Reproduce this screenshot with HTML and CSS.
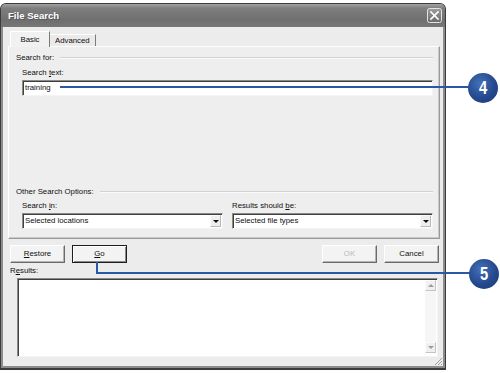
FILE: index.html
```html
<!DOCTYPE html>
<html>
<head>
<meta charset="utf-8">
<title>File Search</title>
<link rel="stylesheet" href="styles.css">
</head>
<body>
<div class="stage">
  <div class="window">
    <div class="titlebar">
      <span class="title">File Search</span>
      <span class="close">
        <svg width="15" height="15" viewBox="0 0 15 15">
          <defs>
            <linearGradient id="cg" x1="0" y1="0" x2="0" y2="1">
              <stop offset="0" stop-color="#9c9c9c"/>
              <stop offset="1" stop-color="#6a6a6a"/>
            </linearGradient>
          </defs>
          <rect x="0.5" y="0.5" width="14" height="14" rx="2" fill="url(#cg)" stroke="#e4e4e4"/>
          <path d="M4 4 L11 11 M11 4 L4 11" stroke="#fff" stroke-width="1.7" stroke-linecap="square"/>
        </svg>
      </span>
    </div>
    <div class="client">
      <div class="tabs">
        <div class="tab active">Basic</div>
        <div class="tab">Advanced</div>
      </div>
      <div class="panel">
        <div class="group"><span>Search for:</span><i class="rule"></i></div>
        <div class="label indent">Search <u>t</u>ext:</div>
        <div class="field indent">training</div>
        <div class="lower">
          <div class="group"><span>Other Search Options:</span><i class="rule"></i></div>
          <div class="cols indent">
            <div class="col">
              <div class="label">Search <u>i</u>n:</div>
              <div class="field select"><span>Selected locations</span><span class="drop"></span></div>
            </div>
            <div class="col">
              <div class="label">Results should <u>b</u>e:</div>
              <div class="field select"><span>Selected file types</span><span class="drop"></span></div>
            </div>
          </div>
        </div>
      </div>
      <div class="buttons">
        <button class="btn"><u>R</u>estore</button>
        <button class="btn default"><u>G</u>o</button>
        <span class="spacer"></span>
        <button class="btn disabled">OK</button>
        <button class="btn">Cancel</button>
      </div>
      <div class="label results-label">R<u>e</u>sults:</div>
      <div class="results">
        <div class="scroll">
          <span class="sbtn up"></span>
          <span class="sbtn down"></span>
        </div>
      </div>
      <svg class="grip" width="10" height="10" viewBox="0 0 10 10">
        <path d="M9 2 L2 9 M9 5 L5 9 M9 8 L8 9" stroke="#a0a0a0" stroke-width="1"/>
      </svg>
    </div>
  </div>

  <div class="line line4"></div>
  <div class="badge badge4"><span>4</span></div>
  <div class="line line5v"></div>
  <div class="line line5h"></div>
  <div class="badge badge5"><span>5</span></div>
</div>
</body>
</html>
```

FILE: styles.css
```css
html, body {
  margin: 0;
  background: #ffffff;
}
body {
  font-family: "Liberation Sans", Arial, sans-serif;
  font-size: 7.8px;
  color: #0e0e0e;
}
.stage {
  position: relative;
  width: 500px;
  height: 373px;
  padding-top: 3px;
  box-sizing: border-box;
  overflow: hidden;
}
.window {
  width: 446px;
  height: 367px;
  box-sizing: border-box;
  border: 1px solid #3c3c3c;
  border-bottom-width: 2px;
  border-radius: 6px 6px 0 0;
  background: #8c8c8c;
  padding: 0 2px 2px;
  display: flex;
  flex-direction: column;
}
.titlebar {
  height: 23px;
  flex: none;
  margin: 0 -2px;
  padding: 0 3px 0 7px;
  display: flex;
  align-items: center;
  justify-content: space-between;
  border-radius: 5px 5px 0 0;
  background: linear-gradient(#a2a2a2 0%, #7e7e7e 18%, #6f6f6f 70%, #777777 100%);
}
.title {
  color: #ffffff;
  font-weight: bold;
  font-size: 9.6px;
  text-shadow: 1px 1px 0 #555;
}
.close {
  display: flex;
  width: 15px;
  height: 15px;
}
.client {
  flex: 1;
  position: relative;
  background: #ececec;
  padding: 4px 3px 0 5px;
  display: flex;
  flex-direction: column;
}
.tabs {
  display: flex;
  align-items: flex-end;
  height: 16px;
  margin: 0 0 -1px 2px;
  position: relative;
  z-index: 1;
}
.tab {
  box-sizing: border-box;
  height: 12px;
  margin-bottom: 1px;
  padding: 0 5px;
  display: flex;
  align-items: center;
  background: #eaeaea;
  border-top: 1px solid #ffffff;
  border-right: 1px solid #7a7a7a;
  line-height: 10px;
}
.tab.active {
  height: 16px;
  margin-bottom: 0;
  width: 40px;
  justify-content: center;
  padding: 0;
  background: #f1f1f1;
  border-left: 1px solid #ffffff;
}
.panel {
  box-sizing: border-box;
  height: 193px;
  width: 432px;
  background: #eeeeee;
  border: 1px solid #9a9a9a;
  border-top-color: #ffffff;
  border-left-color: #ffffff;
  box-shadow: inset -1px -1px 0 #c9c9c9;
  padding: 6px 6px 9px 7px;
  display: flex;
  flex-direction: column;
}
.group {
  display: flex;
  align-items: center;
  height: 10px;
  line-height: 10px;
}
.group span {
  flex: none;
  padding-right: 6px;
}
.rule {
  flex: 1;
  height: 1px;
  background: #d2d2d2;
  border-bottom: 1px solid #fafafa;
}
.indent {
  margin-left: 6px;
}
.label {
  height: 10px;
  line-height: 10px;
}
.panel > .label {
  margin-top: 5px;
}
.field {
  box-sizing: border-box;
  height: 16px;
  margin-top: 2px;
  background: #ffffff;
  border-top: 1px solid #8a8a8a;
  border-left: 1px solid #8a8a8a;
  border-right: 1px solid #f4f4f4;
  border-bottom: 1px solid #f4f4f4;
  box-shadow: inset 1px 1px 0 #3e3e3e;
  padding: 0 2px 0 2px;
  display: flex;
  align-items: center;
  line-height: 10px;
}
.lower {
  margin-top: auto;
}
.cols {
  display: grid;
  grid-template-columns: 201px 201px;
  column-gap: 9px;
  margin-top: 4px;
}
.select {
  justify-content: space-between;
  padding-right: 1px;
}
.drop {
  box-sizing: border-box;
  width: 11px;
  height: 12px;
  background: #eeeeee;
  border: 1px solid #b8b8b8;
  border-top-color: #fafafa;
  border-left-color: #fafafa;
  display: flex;
  align-items: center;
  justify-content: center;
}
.drop::after {
  content: "";
  border-left: 3px solid transparent;
  border-right: 3px solid transparent;
  border-top: 3px solid #111;
}
.buttons {
  display: flex;
  margin: 6px 1px 0 2px;
  gap: 7px;
}
.spacer {
  flex: 1;
}
.btn {
  box-sizing: border-box;
  width: 55px;
  height: 18px;
  margin: 0;
  padding: 0;
  font: inherit;
  color: #0e0e0e;
  background: #f3f3f3;
  border: 1px solid;
  border-color: #ffffff #6a6a6a #6a6a6a #ffffff;
  box-shadow: inset -1px -1px 0 #b4b4b4;
  line-height: 10px;
}
.btn.default {
  border: 1px solid #1e1e1e;
  box-shadow: inset 1px 1px 0 #ffffff, inset -1px -1px 0 #8a8a8a;
}
.btn.disabled {
  color: #b8b8b8;
}
.results-label {
  margin: 3px 0 0 2px;
}
.results {
  box-sizing: border-box;
  height: 79px;
  width: 421px;
  margin: 2px 0 0 9px;
  background: #ffffff;
  border-top: 1px solid #8a8a8a;
  border-left: 1px solid #8a8a8a;
  border-right: 1px solid #f4f4f4;
  border-bottom: 1px solid #f4f4f4;
  box-shadow: inset 1px 1px 0 #3e3e3e;
  display: flex;
  justify-content: flex-end;
  padding: 1px 1px 3px 0;
}
.scroll {
  width: 11px;
  background: #f6f6f6;
  display: flex;
  flex-direction: column;
  justify-content: space-between;
}
.sbtn {
  box-sizing: border-box;
  width: 11px;
  height: 11px;
  background: #f0f0f0;
  border: 1px solid #c4c4c4;
  border-top-color: #fbfbfb;
  border-left-color: #fbfbfb;
  display: flex;
  align-items: center;
  justify-content: center;
}
.sbtn.up::after {
  content: "";
  border-left: 3px solid transparent;
  border-right: 3px solid transparent;
  border-bottom: 3px solid #9c9c9c;
}
.sbtn.down::after {
  content: "";
  border-left: 3px solid transparent;
  border-right: 3px solid transparent;
  border-top: 3px solid #9c9c9c;
}
.grip {
  position: absolute;
  right: 0;
  bottom: 0;
}
.line {
  position: absolute;
  background: #2a57a6;
}
.line4 {
  left: 60px;
  top: 86px;
  width: 412px;
  height: 2px;
}
.line5v {
  left: 96px;
  top: 262px;
  width: 2px;
  height: 12px;
}
.line5h {
  left: 96px;
  top: 272px;
  width: 376px;
  height: 2px;
}
.badge {
  position: absolute;
  width: 30px;
  height: 30px;
  border-radius: 50%;
  background: radial-gradient(circle at 40% 35%, #4570b8 0%, #24498e 55%, #1b3a78 100%);
  color: #ffffff;
  font-family: "Liberation Sans Narrow", "Liberation Sans", sans-serif;
  font-weight: bold;
  font-size: 18px;
  display: flex;
  align-items: center;
  justify-content: center;
}
.badge span {
  display: inline-block;
  transform: scaleX(0.82);
}
.badge4 {
  left: 468px;
  top: 73px;
}
.badge5 {
  left: 469px;
  top: 259px;
}
```
